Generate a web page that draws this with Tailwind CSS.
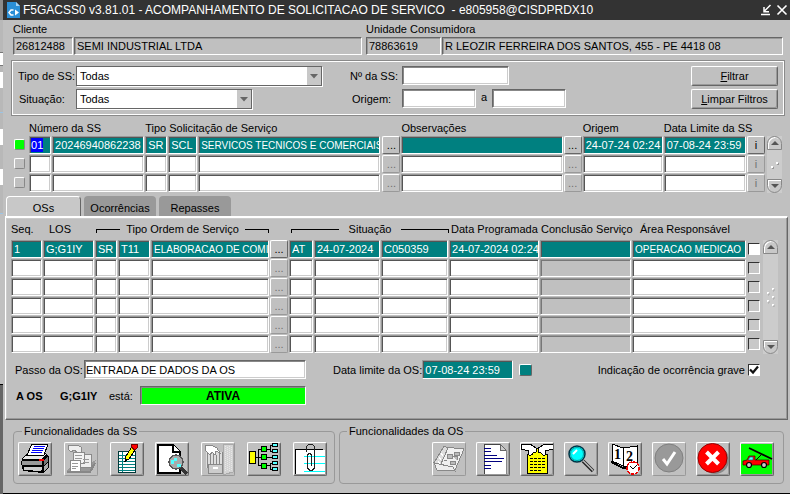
<!DOCTYPE html>
<html lang="pt-BR">
<head>
<meta charset="utf-8">
<meta name="viewport" content="width=device-width, initial-scale=1">
<title>F5GACSS0 v3.81.01 - ACOMPANHAMENTO DE SOLICITACAO DE SERVICO</title>
<script src="https://cdn.jsdelivr.net/npm/@tailwindcss/browser@4"></script>
</head>
<body class="flex min-h-screen bg-[#c0c0c0] font-['Liberation_Sans',Arial,sans-serif] text-[11px] leading-4 text-black">

<!-- Edge of the parent window -->
<div class="flex w-[3px] shrink-0 flex-col bg-[#b8b8b8]" aria-hidden="true">
  <div class="h-5 bg-[#8c8c8c]"></div>
  <div class="h-8"></div>
  <div class="h-3.5 border-y border-[#777] bg-white"></div>
  <div class="h-1.5"></div>
  <div class="h-4 bg-white"></div>
  <div class="h-6"></div>
  <div class="h-px bg-[#9cc4e4]"></div>
  <div class="h-4"></div>
  <div class="h-4 bg-white"></div>
  <div class="h-6"></div>
  <div class="h-4 bg-white"></div>
  <div class="h-7"></div>
  <div class="h-px bg-[#9cc4e4]"></div>
  <div class="h-[170px] bg-[#c0c0c0]"></div>
  <div class="flex-1 border-t border-black bg-[#666]"></div>
</div>

<div class="flex min-w-0 flex-1 flex-col border-b border-black">
  <header class="flex h-5 items-center gap-0.5 bg-[#333] pr-0.5 pl-1 text-white">
    <svg class="h-4 w-3.5" viewBox="0 0 14 16" aria-hidden="true"><path d="M0 0H9L13 4V16H0Z" fill="#2b8fd6"/><path d="M9 0L13 4H9Z" fill="#a8d4f4"/><path d="M6.500 8H4L2 10.500L4 13H6.500" fill="none" stroke="#fff" stroke-width="1.500"/><path d="M8 7.500V13.500L12 10.500Z" fill="#fff"/></svg>
    <h1 class="flex-1 truncate text-xs whitespace-pre">F5GACSS0 v3.81.01 - ACOMPANHAMENTO DE SOLICITACAO DE SERVICO  - e805958@CISDPRDX10</h1>
    <button type="button" aria-label="Restaurar" class="h-3 w-3"><svg viewBox="0 0 12 12" fill="none" stroke="#fff" stroke-width="1.500"><path d="M10.500 1L4 7.500M4 3V7.700H9M1 10.500H10"/></svg></button>
    <button type="button" aria-label="Fechar" class="ml-0.5 h-3 w-3"><svg viewBox="0 0 12 12" fill="none" stroke="#fff" stroke-width="1.600"><path d="M1.500 1.500L10.500 10.500M10.500 1.500L1.500 10.500"/></svg></button>
  </header>

  <section class="grid grid-cols-[61fr_288fr_4px_76fr_341fr] pt-px pr-[7px] pl-2.5">
    <label for="cli" class="col-span-3">Cliente</label>
    <label for="uc" class="col-span-2">Unidade Consumidora</label>
    <input id="cli" readonly value="26812488" class="mr-px h-[18px] min-w-0 border border-t-[#666] border-r-white border-b-white border-l-[#666] bg-[#c0c0c0] px-0.5 shadow-[inset_1px_1px_0_#999]">
    <input aria-label="Nome do cliente" readonly value="SEMI INDUSTRIAL LTDA" class="h-[18px] min-w-0 border border-t-[#666] border-r-white border-b-white border-l-[#666] bg-[#c0c0c0] px-0.5 shadow-[inset_1px_1px_0_#999]">
    <span></span>
    <input id="uc" readonly value="78863619" class="mr-px h-[18px] min-w-0 border border-t-[#666] border-r-white border-b-white border-l-[#666] bg-[#c0c0c0] px-0.5 shadow-[inset_1px_1px_0_#999]">
    <input aria-label="Endereço" readonly value="R LEOZIR FERREIRA DOS SANTOS, 455 - PE 4418 08" class="h-[18px] min-w-0 border border-t-[#666] border-r-white border-b-white border-l-[#666] bg-[#c0c0c0] px-0.5 shadow-[inset_1px_1px_0_#999]">
  </section>

  <form class="mt-[5px] mr-[5px] ml-2 flex border border-[#8a8a8a] px-1.5 pt-[5px] pb-1.5 shadow-[inset_1px_1px_0_#fff,inset_-1px_-1px_0_#fff]">
    <div class="grid grid-cols-[58px_246px] gap-y-[3px]">
      <label for="tipo" class="leading-5">Tipo de SS:</label>
      <div class="grid h-5 border border-[#666] bg-white shadow-[1px_1px_0_#fff]">
        <select id="tipo" class="col-start-1 row-start-1 appearance-none bg-white pl-[3px] outline-none"><option>Todas</option></select>
        <span class="pointer-events-none col-start-1 row-start-1 grid w-3.5 place-items-center justify-self-end bg-[#c8c8c8]"><svg class="h-1.5 w-2" viewBox="0 0 8 6"><path d="M0 1H8L4 5.500Z" fill="#666"/></svg></span>
      </div>
      <label for="sit" class="pl-px leading-5">Situação:</label>
      <div class="mr-[70px] grid h-5 border border-[#666] bg-white shadow-[1px_1px_0_#fff]">
        <select id="sit" class="col-start-1 row-start-1 appearance-none bg-white pl-[3px] outline-none"><option>Todas</option></select>
        <span class="pointer-events-none col-start-1 row-start-1 grid w-3.5 place-items-center justify-self-end bg-[#c8c8c8]"><svg class="h-1.5 w-2" viewBox="0 0 8 6"><path d="M0 1H8L4 5.500Z" fill="#666"/></svg></span>
      </div>
    </div>
    <div class="ml-7 grid grid-cols-[52px_74px_16px_74px] gap-y-[3px]">
      <label for="nss" class="leading-5">Nº da SS:</label>
      <div class="col-span-3"><input id="nss" class="h-[19px] w-[107px] border border-t-[#666] border-r-white border-b-white border-l-[#666] bg-white px-0.5 shadow-[inset_1px_1px_0_#888,inset_-1px_-1px_0_#ccc]"></div>
      <label for="ori" class="pl-0.5 leading-5">Origem:</label>
      <input id="ori" class="h-[19px] min-w-0 border border-t-[#666] border-r-white border-b-white border-l-[#666] bg-white px-0.5 shadow-[inset_1px_1px_0_#888,inset_-1px_-1px_0_#ccc]">
      <label for="ori2" class="text-center">a</label>
      <input id="ori2" class="h-[19px] min-w-0 border border-t-[#666] border-r-white border-b-white border-l-[#666] bg-white px-0.5 shadow-[inset_1px_1px_0_#888,inset_-1px_-1px_0_#ccc]">
    </div>
    <div class="ml-auto grid w-[87px] gap-y-[3px]">
      <button type="button" class="h-5 rounded-xs border border-t-white border-r-[#666] border-b-[#666] border-l-white whitespace-nowrap shadow-[inset_-1px_-1px_0_#999]"><u>F</u>iltrar</button>
      <button type="button" class="h-5 rounded-xs border border-t-white border-r-[#666] border-b-[#666] border-l-white whitespace-nowrap shadow-[inset_-1px_-1px_0_#999]"><u>L</u>impar Filtros</button>
    </div>
  </form>

  <!-- Solicitações de serviço -->
  <section class="mt-[3px] flex pr-2 pl-2.5">
    <table class="w-full min-w-0 flex-1 table-fixed border-collapse">
      <colgroup><col class="w-4"><col class="w-[23px]"><col class="w-[93px]"><col class="w-[23px]"><col class="w-[30px]"><col class="w-[183px]"><col class="w-5"><col class="w-[162px]"><col class="w-[19px]"><col class="w-[81px]"><col class="w-[83px]"><col class="w-[19px]"></colgroup>
      <thead><tr class="h-[17px] text-left whitespace-nowrap">
        <td class="p-0"></td><th colspan="2" class="p-0 font-normal">Número da SS</th><th colspan="3" class="p-0 font-normal">Tipo Solicitação de Serviço</th><td class="p-0"></td><th class="p-0 font-normal">Observações</th><td class="p-0"></td><th class="p-0 font-normal">Origem</th><th class="p-0 font-normal" colspan="2">Data Limite da SS</th>
      </tr></thead>
      <tbody id="ssRows"></tbody>
    </table>
    <div class="mt-[17px] ml-px flex w-[15px] flex-col justify-between bg-[#ccc]">
      <button type="button" aria-label="Anterior" class="grid h-3.5 place-items-center rounded-t-lg border border-[#888] bg-[#c8c8c8] shadow-[inset_1px_1px_0_#fff]"><svg class="h-1 w-2" viewBox="0 0 8 4"><path d="M0 4H8L4 0Z" fill="#555"/></svg></button>
      <svg class="mx-auto h-2 w-2" viewBox="0 0 8 8" aria-hidden="true"><path d="M0 5H2V7H0ZM5 1H7V3H5Z" fill="#fff"/><path d="M2 7H1V8H3V6H2ZM7 3H6V4H8V2H7Z" fill="#999"/></svg>
      <button type="button" aria-label="Próximo" class="grid h-3.5 place-items-center rounded-b-lg border border-[#888] bg-[#c8c8c8] shadow-[inset_1px_1px_0_#fff]"><svg class="h-1 w-2" viewBox="0 0 8 4"><path d="M0 0H8L4 4Z" fill="#555"/></svg></button>
    </div>
  </section>

  <nav class="mt-[3px] ml-[3px] flex h-5 gap-[3px]" role="tablist">
    <button type="button" role="tab" aria-selected="true" class="-mb-0.5 w-[75px] rounded-t border-t border-r border-l border-t-white border-r-[#666] border-l-white bg-[#c8c8c8]">OSs</button>
    <button type="button" role="tab" aria-selected="false" class="w-[72px] rounded-t bg-[#999] pt-1">Ocorrências</button>
    <button type="button" role="tab" aria-selected="false" class="w-[72px] rounded-t bg-[#999] pt-1">Repasses</button>
  </nav>

  <section class="mr-[2px] ml-[2px] border border-t-2 border-t-white border-r-[#666] border-b-[#666] border-l-white pb-3.5 pl-[5px] shadow-[inset_-1px_-1px_0_#999,inset_1px_1px_0_#ccc]">
    <div class="flex pr-[9px]">
      <table class="w-full min-w-0 flex-1 table-fixed border-collapse">
        <colgroup><col class="w-8"><col class="w-[52px]"><col class="w-[23px]"><col class="w-[33px]"><col class="w-[119px]"><col class="w-[19px]"><col class="w-[25px]"><col class="w-[67px]"><col class="w-[68px]"><col class="w-[91px]"><col class="w-[92px]"><col class="w-[115px]"><col class="w-[13px]"></colgroup>
        <thead><tr class="h-[22px] text-left whitespace-nowrap">
          <th class="p-0 font-normal">Seq.</th><th class="p-0 pl-1.5 font-normal">LOS</th>
          <th colspan="3" class="p-0 font-normal"><span class="flex items-center justify-between px-px"><i class="mt-1 h-1 w-6 border-t border-l border-black"></i>Tipo Ordem de Serviço<i class="mt-1 h-1 w-6 border-t border-r border-black"></i></span></th>
          <td class="p-0"></td>
          <th colspan="3" class="p-0 font-normal"><span class="flex items-center justify-between gap-2.5 pl-0.5"><i class="mt-1 h-1 flex-1 border-t border-l border-black"></i>Situação<i class="mt-1 h-1 flex-1 border-t border-r border-black"></i></span></th>
          <th class="p-0 pl-0.5 font-normal">Data Programada</th><th class="p-0 pl-px font-normal">Conclusão Serviço</th><th class="p-0 pl-2 font-normal">Área Responsável</th><td class="p-0"></td>
        </tr></thead>
        <tbody id="osRows"></tbody>
      </table>
      <div class="mt-[22px] ml-[3px] flex w-[15px] flex-col justify-between bg-[#ccc]">
        <button type="button" aria-label="Anterior" class="grid h-3.5 place-items-center rounded-t-lg border border-[#888] bg-[#c8c8c8] shadow-[inset_1px_1px_0_#fff]"><svg class="h-1 w-2" viewBox="0 0 8 4"><path d="M0 4H8L4 0Z" fill="#555"/></svg></button>
        <svg class="mx-auto h-5 w-2" viewBox="0 0 8 20" aria-hidden="true"><path d="M0 5H2V7H0ZM5 1H7V3H5ZM5 9H7V11H5ZM0 13H2V15H0ZM5 17H7V19H5Z" fill="#fff"/><path d="M2 6V8H1M7 2V4H6M7 10V12H6M2 14V16H1M7 18V20H6" fill="none" stroke="#aaa"/></svg>
        <button type="button" aria-label="Próximo" class="grid h-3.5 place-items-center rounded-b-lg border border-[#888] bg-[#c8c8c8] shadow-[inset_1px_1px_0_#fff]"><svg class="h-1 w-2" viewBox="0 0 8 4"><path d="M0 0H8L4 4Z" fill="#555"/></svg></button>
      </div>
    </div>

    <div class="mt-1.5 flex h-[19px] items-center pr-[27px] pl-1">
      <label for="passo" class="w-[69px] shrink-0">Passo da OS:</label>
      <input id="passo" value="ENTRADA DE DADOS DA OS" class="h-[19px] w-[222px] border border-t-[#666] border-r-white border-b-white border-l-[#666] bg-white px-px shadow-[inset_1px_1px_0_#888,inset_-1px_-1px_0_#ccc]">
      <label for="dl" class="ml-[27px]">Data limite da OS:</label>
      <input id="dl" value="07-08-24 23:59" class="h-[19px] w-[91px] border border-t-[#999] border-r-white border-b-white border-l-[#999] bg-[#008080] px-0.5 text-white shadow-[inset_1px_1px_0_#555]">
      <span class="ml-1.5 h-3 w-[13px] rounded-xs border border-t-white border-r-[#666] border-b-[#666] border-l-white bg-[#008080]"></span>
      <label for="grave" class="ml-auto whitespace-nowrap">Indicação de ocorrência grave</label>
      <span class="ml-[3px] grid h-3 w-3">
        <input id="grave" type="checkbox" checked class="peer col-start-1 row-start-1 h-3 w-3 appearance-none border border-t-[#333] border-r-white border-b-white border-l-[#333] bg-white">
        <svg class="pointer-events-none invisible col-start-1 row-start-1 h-2.5 w-2.5 place-self-center peer-checked:visible" viewBox="0 0 10 10"><path d="M1 4.500L4 7.500L9 1.500" fill="none" stroke="#111" stroke-width="2.200"/></svg>
      </span>
    </div>
    <div class="mt-[7px] flex h-[19px] items-center pl-[5px]">
      <b class="w-[44px]">A OS</b><b class="w-[49px]">G;G1IY</b><label for="st" class="w-[31px]">está:</label>
      <input id="st" readonly value="ATIVA" class="h-[19px] w-[166px] border border-t-[#666] border-r-white border-b-white border-l-[#666] bg-[#00ff00] text-center text-xs font-bold shadow-[inset_1px_1px_0_#888]">
    </div>
  </section>

  <div class="mt-[3px] flex gap-1 pr-1.5 pb-[9px] pl-2.5">
    <fieldset class="w-[322px] shrink-0 rounded-sm border border-[#999] px-1 pb-[7px]">
      <legend class="ml-1 px-0.5">Funcionalidades da SS</legend>
      <div class="flex justify-between pt-[3px] pr-[3px]">
        <button type="button" aria-label="Imprimir" class="h-[34px] w-[34px] rounded-xs border border-t-white border-r-[#666] border-b-[#666] border-l-white shadow-[inset_-1px_-1px_0_#999]"><svg viewBox="0 0 32 32" shape-rendering="crispEdges"><path d="M8 10L3 16L2 20L4 28L24 30L30 25V14L27 10Z" fill="#000"/><path d="M4 15L9 11H27L23 16L4 16Z" fill="#e8e8e8"/><path d="M3 18H23V22H3Z" fill="#999"/><path d="M25 17L29 13V18L25 22Z" fill="#777"/><path d="M5 24H23V26L22 28L5 27Z" fill="#ccc"/><path d="M25 23L29 20V24L25 28Z" fill="#aaa"/><path d="M20 16H25V18H20Z" fill="#f00"/><path d="M13 1H29L25 12H8Z" fill="#fff" stroke="#000"/><path d="M15 3.500H26M14 5.500H25M13 7.500H24M12 9.500H23" stroke="#00f" stroke-width="1.200"/></svg></button>
        <button type="button" disabled aria-label="Formulários" class="h-[34px] w-[34px] rounded-xs border border-t-white border-r-[#999] border-b-[#999] border-l-white"><svg viewBox="0 0 32 32" shape-rendering="crispEdges"><path d="M3 2H12L16 4V9H12L9 7L6 9L3 6Z" fill="#eee" stroke="#8a8a8a"/><path d="M2 27L7 22H20L31 17L25 28H2Z" fill="#999"/><path d="M15 11H26V24H15Z" fill="#eee" stroke="#8a8a8a"/><path d="M8 9H19V20H8Z" fill="#f4f4f4" stroke="#8a8a8a"/><path d="M5 17H15V28H5Z" fill="#fff" stroke="#8a8a8a"/><path d="M10 12H17M10 15H17M7 20H13M7 23H13M7 25H11M18 16H24M18 19H24" stroke="#999"/><path d="M2 29H25L30 20" fill="none" stroke="#888" stroke-width="2"/></svg></button>
        <button type="button" aria-label="Editar" class="h-[34px] w-[34px] rounded-xs border border-t-white border-r-[#666] border-b-[#666] border-l-white shadow-[inset_-1px_-1px_0_#999]"><svg viewBox="0 0 32 32" shape-rendering="crispEdges"><path d="M7 8H25V30H7Z" fill="#fff"/><path d="M8 12.500H24M8 15.500H24M8 18.500H24M8 21.500H24M8 24.500H24M8 27.500H24M11.500 9V30" stroke="#008080"/><path d="M7.500 8.500H24.500V29.500H7.500Z" fill="none" stroke="#003838"/><path d="M22 2L26 4L18 16L14 18L15 13Z" fill="#ff0" stroke="#000"/><path d="M21 1H26V5L24 7L20 4Z" fill="#f00" stroke="#700"/><path d="M14 15V19L17 17Z" fill="#000"/></svg></button>
        <button type="button" aria-label="Visualizar" class="h-[34px] w-[34px] rounded-xs border border-t-white border-r-[#666] border-b-[#666] border-l-white shadow-[inset_-1px_-1px_0_#999]"><svg viewBox="0 0 32 32" shape-rendering="crispEdges"><path d="M2 2H17L24 9V30H2Z" fill="#fff" stroke="#000" stroke-width="2"/><path d="M17 2V9H24" fill="#fff" stroke="#000" stroke-width="1.500"/><path d="M24 24L31 31" stroke="#333" stroke-width="3"/><circle cx="20" cy="19" r="7" fill="#aaa" stroke="#555" stroke-width="1.500"/><path d="M15 17H18V15H21V18H18V21H15ZM21 21H25V24H21Z" fill="#5ff"/></svg></button>
        <button type="button" disabled aria-label="Arquivo" class="h-[34px] w-[34px] rounded-xs border border-t-white border-r-[#999] border-b-[#999] border-l-white"><svg viewBox="0 0 32 32" shape-rendering="crispEdges"><path d="M21 1H31V29L24 31H21Z" fill="#d4d4d4" stroke="#aaa"/><path d="M23 3V28M25 4V28M27 3V28M29 4V27" stroke="#e8e8e8" stroke-dasharray="1 1"/><path d="M4 9H21V25H4Z" fill="#ddd"/><path d="M5.500 10V25M8.500 12V25M11.500 10V25M14.500 12V25M17.500 10V25M20.500 9V25" stroke="#888"/><path d="M3 2H9L15 5L18 10L14 8L13 12L10 9L8 12L3 7Z" fill="#fff" stroke="#888"/><path d="M6 21H20V30H6Z" fill="#ccc" stroke="#888"/><path d="M11 24H16V26H11Z" fill="#fff"/></svg></button>
        <button type="button" aria-label="Hierarquia" class="h-[34px] w-[34px] rounded-xs border border-t-white border-r-[#666] border-b-[#666] border-l-white shadow-[inset_-1px_-1px_0_#999]"><svg viewBox="0 0 32 32" shape-rendering="crispEdges" stroke="#000"><path d="M8 14.500H13M10.500 6V23M10 6.500H13M10 22.500H13M19 6.500H22M22.500 2V9M22 2.500H25M22 8.500H25M19 14.500H25M19 22.500H22M22.500 20V27M22 20.500H25M22 26.500H25" fill="none"/><path d="M1.500 8.500H7.500V20.500H1.500Z" fill="#ff0"/><path d="M13.500 3.500H18.500V8.500H13.500ZM13.500 11.500H18.500V16.500H13.500ZM13.500 20.500H18.500V25.500H13.500Z" fill="#0f0"/><path d="M24.500 .5H29.500V3.500H24.500ZM24.500 6.500H29.500V9.500H24.500ZM24.500 12.500H29.500V15.500H24.500ZM24.500 18.500H29.500V21.500H24.500ZM24.500 24.500H29.500V27.500H24.500Z" fill="#5ff"/></svg></button>
        <button type="button" aria-label="Anexos" class="h-[34px] w-[34px] rounded-xs border border-t-white border-r-[#666] border-b-[#666] border-l-white shadow-[inset_-1px_-1px_0_#999]"><svg viewBox="0 0 32 32" shape-rendering="crispEdges"><path d="M2 7H31V31H2Z" fill="#fff"/><path d="M1 6H29V7H2V31H1Z" fill="#000"/><path d="M10 13H31V14H10ZM10 20H31V21H10ZM10 28H31V29H10Z" fill="#0ff"/><path d="M12.500 9V3.500L14.500 1.500H18.500L20.500 3.500V25L18.500 27.500H15.500L13.500 25V12L15 10.500H16L17.500 12V23" fill="none" stroke="#222" stroke-width="1.300"/></svg></button>
      </div>
    </fieldset>
    <fieldset class="min-w-0 flex-1 rounded-sm border border-[#999] px-[9px] pb-[7px]">
      <legend class="-ml-0.5 px-0.5">Funcionalidades da OS</legend>
      <div class="flex justify-end gap-2.5 pt-[3px]">
        <button type="button" disabled aria-label="Croqui" class="h-[34px] w-[34px] rounded-xs border border-t-white border-r-[#999] border-b-[#999] border-l-white"><svg viewBox="0 0 32 32" shape-rendering="crispEdges"><path d="M11 4L31 6L22 27L4 24Z" fill="#f0f0f0" stroke="#888"/><path d="M11 3L15 5L7 23L3 24L1 20Z" fill="#ddd" stroke="#888"/><path d="M1 20L20 24L22 28L4 27Z" fill="#eee" stroke="#888"/><path d="M14 11H19V15H14ZM21 9H26V12H21ZM17 18H22V21H17ZM11 17H14M19 13H24V17" fill="#bbb" stroke="#888"/><path d="M8 11L10 12M6 15L8 16M5 19L7 20" stroke="#fff" stroke-width="2"/></svg></button>
        <button type="button" aria-label="Documento" class="h-[34px] w-[34px] rounded-xs border border-t-white border-r-[#666] border-b-[#666] border-l-white shadow-[inset_-1px_-1px_0_#999]"><svg viewBox="0 0 32 32" shape-rendering="crispEdges"><path d="M7 1H23L29 7V31H7Z" fill="#fff"/><path d="M7.500 31V1.500H23" fill="none" stroke="#444"/><path d="M23 1V7H29Z" fill="#ccc" stroke="#666"/><path d="M29.500 7V31" stroke="#888"/><path d="M7 5.500H14M7 8.500H14M7 12.500H20M7 15.500H27M7 18.500H25M7 22.500H14M7 25.500H14" stroke="#000080"/></svg></button>
        <button type="button" aria-label="Anotação" class="h-[34px] w-[34px] rounded-xs border border-t-white border-r-[#666] border-b-[#666] border-l-white shadow-[inset_-1px_-1px_0_#999]"><svg viewBox="0 0 32 32" shape-rendering="crispEdges"><path d="M11 5.500H22V11.500H26.500V30.500H6.500V11.500H11Z" fill="#ff0" stroke="#000"/><path d="M9 15.500H24M9 18.500H24M9 21.500H24M9 24.500H24M9 27.500H20" stroke="#000" stroke-dasharray="3 1"/><path d="M0 1H9L15 5V9L12 10L9 13L7 11L8 8L0 6Z" fill="#fff" stroke="#000"/><path d="M32 1H24L17 5V9L20 10L23 13L25 11L24 8L32 6Z" fill="#fff" stroke="#000"/></svg></button>
        <button type="button" aria-label="Pesquisar" class="h-[34px] w-[34px] rounded-xs border border-t-white border-r-[#666] border-b-[#666] border-l-white shadow-[inset_-1px_-1px_0_#999]"><svg viewBox="0 0 32 32"><path d="M18 18L28 28" stroke="#222" stroke-width="3.500"/><path d="M18 17.500L28 27.500" stroke="#bbb" stroke-width="1.500"/><circle cx="12" cy="11" r="8" fill="#0ff" stroke="#034" stroke-width="1.500"/><circle cx="12" cy="11" r="6.500" fill="none" stroke="#08a0a0"/><path d="M8 11L12 7" stroke="#fff" stroke-width="2"/></svg></button>
        <button type="button" aria-label="Agenda" class="h-[34px] w-[34px] rounded-xs border border-t-white border-r-[#666] border-b-[#666] border-l-white shadow-[inset_-1px_-1px_0_#999]"><svg viewBox="0 0 32 32" shape-rendering="crispEdges"><path d="M3 1L14 5V23L3 18Z" fill="#fff" stroke="#000"/><path d="M14 5L28 3V22L14 24Z" fill="#fff" stroke="#000"/><path d="M2 19L14 25L20 24" fill="none" stroke="#000" stroke-width="2"/><text x="5" y="16" font-family="Liberation Serif" font-size="14" font-weight="700">1</text><text x="17" y="18" font-family="Liberation Serif" font-size="14" font-weight="700">2</text><circle cx="24" cy="25" r="6" fill="#fff" stroke="#e00" stroke-width="1.500" stroke-dasharray="3 1"/><path d="M21 23L24 26L28 22" fill="none" stroke="#000"/></svg></button>
        <button type="button" disabled aria-label="Confirmar" class="h-[34px] w-[34px] rounded-xs border border-t-white border-r-[#999] border-b-[#999] border-l-white"><svg viewBox="0 0 32 32"><circle cx="16" cy="15" r="14" fill="#999" stroke="#808080"/><path d="M10 16L14 21L22 9" fill="none" stroke="#fff" stroke-width="3"/></svg></button>
        <button type="button" aria-label="Cancelar" class="h-[34px] w-[34px] rounded-xs border border-t-white border-r-[#666] border-b-[#666] border-l-white shadow-[inset_-1px_-1px_0_#999]"><svg viewBox="0 0 32 32"><circle cx="18" cy="17" r="14" fill="#888"/><circle cx="15.500" cy="15" r="14.500" fill="#f00" stroke="#900"/><path d="M9.500 9L21.500 21M21.500 9L9.500 21" stroke="#fff" stroke-width="4"/></svg></button>
        <button type="button" aria-label="Viatura" class="h-[34px] w-[34px] rounded-xs border border-t-white border-r-[#666] border-b-[#666] border-l-white shadow-[inset_-1px_-1px_0_#999]"><svg viewBox="0 0 32 32"><path d="M0 1H31V31H0Z" fill="#0f0"/><path d="M8 5L31 16" stroke="#000" stroke-width="1.800"/><path d="M2 21V18L6 17L8 13H14V17H28V22H2Z" fill="#f00" stroke="#300" stroke-width=".7"/><path d="M7 17L9 14H12V17Z" fill="#5ff" stroke="#066" stroke-width=".6"/><path d="M15 17L20 12" stroke="#000"/><circle cx="8" cy="22" r="2.500" fill="#ccc" stroke="#000" stroke-width="1.200"/><circle cx="23" cy="22" r="2.500" fill="#ccc" stroke="#000" stroke-width="1.200"/></svg></button>
      </div>
    </fieldset>
  </div>
</div>

<script>
const base = 'block h-[18px] w-full min-w-0 border border-t-[#999] border-r-white border-b-white border-l-[#999] pl-0.5 ';
const tone = {
  white: 'bg-white shadow-[inset_1px_1px_0_#555,inset_-1px_-1px_0_#ccc]',
  teal: 'bg-[#008080] text-white shadow-[inset_1px_1px_0_#555]',
  gray: 'bg-[#c0c0c0] shadow-[inset_1px_1px_0_#777]'
};
// Long descriptions are set one pixel smaller than codes and dates.
const field = (name, value, t, long) => `<td class="p-0 pr-px pb-px"><input aria-label="${name}" value="${value}" class="${base}${tone[t]} ${long ? 'text-[10px]' : 'text-[11px]'}"></td>`;
const more = (text, on, name) => `<td class="p-0 pr-px pb-px"><button type="button" aria-label="${name}" ${on ? '' : 'disabled'} class="${on
  ? 'ml-auto block h-[18px] w-[18px] rounded-xs border border-t-white border-r-[#666] border-b-[#666] border-l-white text-[11px] leading-4'
  : 'ml-auto block h-[18px] w-[18px] rounded-xs border border-t-white border-r-[#999] border-b-[#999] border-l-white text-[11px] leading-4 text-[#707070]'}">${text}</button></td>`;

const ss = ['01', '20246940862238', 'SR', 'SCL', 'SERVICOS TECNICOS E COMERCIAIS', '', '24-07-24 02:24', '07-08-24 23:59'];
const ssNames = ['Item', 'Número da SS', 'Tipo', 'Sigla', 'Descrição', 'Observações', 'Origem', 'Data Limite da SS'];
document.getElementById('ssRows').innerHTML = [0, 1, 2].map(r => {
  const first = r === 0;
  const f = i => field(ssNames[i], first ? ss[i] : '', first ? 'teal' : 'white', i === 4);
  const lamp = `<td class="p-0 pt-[3px] align-top"><span class="${first
    ? 'ml-px block h-[11px] w-[11px] rounded-xs border border-t-white border-r-[#888] border-b-[#888] border-l-white bg-[#00ff00]'
    : 'ml-px block h-[11px] w-[11px] rounded-xs border border-t-white border-r-[#888] border-b-[#888] border-l-white'}"></span></td>`;
  const item = first
    ? '<td class="p-0 pr-px pb-px"><div class="flex h-[18px] items-center border border-t-[#999] border-r-white border-b-white border-l-[#999] bg-[#008080] pl-px text-white shadow-[inset_1px_1px_0_#555]"><span class="bg-[#0000ff] leading-[14px]">01</span></div></td>'
    : f(0);
  return `<tr class="h-[19px]">${lamp}${item}${f(1)}${f(2)}${f(3)}${f(4)}${more('...', first, 'Detalhar')}${f(5)}${more('...', first, 'Detalhar')}${f(6)}${f(7)}${more('i', first, 'Informações')}</tr>`;
}).join('');

const os = ['1', 'G;G1IY', 'SR', 'T11', 'ELABORACAO DE COMISSIONAMENTO', 'AT', '24-07-2024', 'C050359', '24-07-2024 02:24', '', 'OPERACAO MEDICAO'];
const osNames = ['Seq.', 'LOS', 'Tipo', 'Código', 'Tipo Ordem de Serviço', 'Situação', 'Data da situação', 'Usuário', 'Data Programada', 'Conclusão Serviço', 'Área Responsável'];
document.getElementById('osRows').innerHTML = [0, 1, 2, 3, 4, 5].map(r => {
  const first = r === 0;
  const f = i => field(osNames[i], first ? os[i] : '', first ? 'teal' : i === 9 ? 'gray' : 'white', i === 4 || i === 10);
  const check = `<td class="p-0 pb-px"><input type="checkbox" aria-label="Selecionar" ${first ? '' : 'disabled'} class="${first
    ? 'ml-px block h-3 w-3 appearance-none border border-t-[#333] border-r-white border-b-white border-l-[#333] bg-white'
    : 'ml-px block h-3 w-3 appearance-none border border-t-[#333] border-r-white border-b-white border-l-[#333] bg-[#c8c8c8]'}"></td>`;
  return `<tr class="h-[19px]">${[0, 1, 2, 3, 4].map(f).join('')}${more('...', first, 'Detalhar')}${[5, 6, 7, 8, 9, 10].map(f).join('')}${check}</tr>`;
}).join('');
</script>
</body>
</html>
